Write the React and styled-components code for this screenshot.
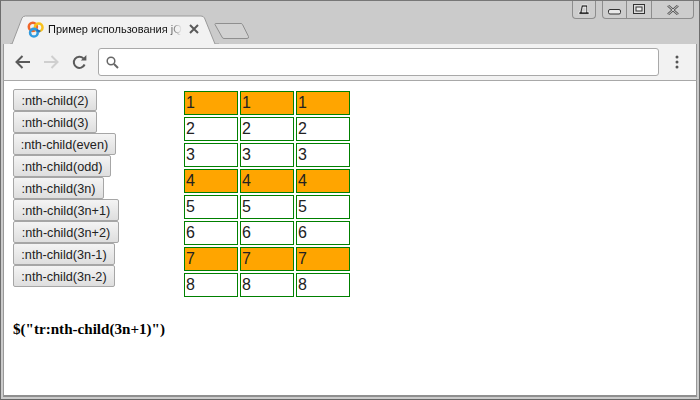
import React from "react";
import styled, { createGlobalStyle } from "styled-components";

const Global = createGlobalStyle`
  html, body { margin: 0; padding: 0; background: #fff; overflow: hidden; }
  * { box-sizing: border-box; }
`;
const Win = styled.div`
  width: 700px; height: 400px; background: #cbcbcb;
  border: 1px solid #6d6d6d; border-top-color: #777; border-bottom: 1px solid #666;
  display: flex; flex-direction: column; overflow: hidden;
`;
const TitleBar = styled.div`
  height: 43px; flex: none; display: flex; align-items: flex-start; position: relative;
  padding-left: 9px; justify-content: space-between;
`;
const Tabs = styled.div`display: flex; align-items: flex-start; padding-top: 14px;`;
const Tab = styled.div`
  position: relative; width: 209px; height: 29px; display: flex; align-items: center;
  padding: 0 0 0 17px;
`;
const TabShape = styled.svg`position: absolute; left: 0; top: 0;`;
const Fav = styled.svg`position: relative; flex: none;`;
const TabTitle = styled.span`
  position: relative; margin-left: 4px; width: 136px; overflow: hidden; white-space: nowrap;
  font: 11px "Liberation Sans", Arial, sans-serif; color: #111; margin-top: -2px;
  -webkit-mask-image: linear-gradient(to right, #000 118px, transparent 134px);
  mask-image: linear-gradient(to right, #000 118px, transparent 134px);
`;
const TabClose = styled.svg`position: relative; flex: none; margin-left: 5px; margin-top: -2px;`;
const NewTab = styled.svg`flex: none; margin: 7px 0 0 -5px;`;
const Caps = styled.div`display: flex; align-items: flex-start; margin-right: 5px;`;
const Cap = styled.div`
  height: 18px; border: 1px solid #8d8d8d; border-top: 0; width: ${p => p.$w}px;
  display: flex; align-items: center; justify-content: center; background: #cdcdcd;
  margin-left: ${p => p.$gap || 0}px;
  border-left-width: ${p => (p.$joined ? 0 : 1)}px;
  border-radius: ${p => p.$r || "0"};
`;
const Toolbar = styled.div`
  height: 37px; flex: none; margin: 0 2px; background: #f2f2f2; border: 0 solid #999;
  border-width: 0 1px 1px; border-bottom-color: #a8a8a8;
  display: flex; align-items: center; padding: 0 0 0 11px;
`;
const NavIcon = styled.svg`flex: none; margin-right: ${p => p.$mr}px;`;
const Omni = styled.div`
  width: 561px; height: 28px; background: #fff; border: 1px solid #a9a9a9; border-radius: 3px;
  display: flex; align-items: center; padding-left: 7px; margin-left: 3px;
`;
const Menu = styled.svg`margin-left: 16px; flex: none;`;
const Page = styled.div`
  flex: 1; margin: 0 2px 2px; background: #fff; border: 0 solid #8f8f8f;
  border-right: 1px solid #999; border-left: 1px solid #999; border-bottom: 2px solid #8f8f8f;
  padding: 8px 9px 0; font-family: "Liberation Sans", Arial, sans-serif;
`;
const Columns = styled.div`display: flex; align-items: flex-start;`;
const Buttons = styled.div`width: 170px; display: flex; flex-direction: column; align-items: flex-start;`;
const Btn = styled.button`
  height: 22px; width: ${p => p.$w}px; padding: 1px 0 0; margin: 0;
  font: 12.7px "Liberation Sans", Arial, sans-serif; color: #222;
  border: 1px solid #a6a6a6; border-radius: 2px;
  background: linear-gradient(#f4f4f4, #dedede);
`;
const Table = styled.div`
  display: grid; grid-template-columns: repeat(3, 54px); grid-auto-rows: 24px; gap: 2px;
  margin: 2px 0 0 1px;
`;
const Cell = styled.div`
  border: 1px solid green; background: ${p => (p.$hit ? "orange" : "#fff")};
  font: 16px/22px "Liberation Sans", Arial, sans-serif; color: #222; padding-left: 1px;
`;
const Code = styled.div`
  margin-top: 24px; font: bold 15.1px "Liberation Serif", "Times New Roman", serif; color: #000;
`;

const buttons = [
  [":nth-child(2)", 84], [":nth-child(3)", 84], [":nth-child(even)", 103], [":nth-child(odd)", 98],
  [":nth-child(3n)", 91], [":nth-child(3n+1)", 106], [":nth-child(3n+2)", 106],
  [":nth-child(3n-1)", 102], [":nth-child(3n-2)", 102],
];
const rows = [1, 2, 3, 4, 5, 6, 7, 8];

export default function App() {
  return (
    <>
      <Global />
      <Win>
        <TitleBar>
          <Tabs>
            <Tab>
              <TabShape width="209" height="29" viewBox="0 0 209 29">
                <path d="M0 29 H2 L12 3 Q13 1 15.5 1 H191 Q193.5 1 194.5 3 L205 29 H209" fill="#f2f2f2" stroke="#9a9a9a" />
              </TabShape>
              <Fav width="17" height="17" viewBox="0 0 16 16" fill="none">
                <circle cx="5.5" cy="5.5" r="3.8" stroke="#f0662a" strokeWidth="2.4" />
                <circle cx="11" cy="6" r="3.6" stroke="#f8c11c" strokeWidth="2.4" />
                <circle cx="6.5" cy="11" r="3.6" stroke="#2f9be0" strokeWidth="2.4" />
                <path d="M9 8.5 L12.5 10" stroke="#1f6fc0" strokeWidth="2" />
              </Fav>
              <TabTitle>Пример использования jQuery</TabTitle>
              <TabClose width="10" height="10" viewBox="0 0 10 10">
                <path d="M1 1 L9 9 M9 1 L1 9" stroke="#5a5a5a" strokeWidth="2" />
              </TabClose>
            </Tab>
            <NewTab width="36" height="18" viewBox="0 0 36 18">
              <path d="M1.5 1.5 H27 Q28 1.5 28.5 2.5 L34.5 14.5 Q35 16.5 33 16.5 H10 Q8.5 16.5 8 15 L1 2.5 Q1 1.5 1.5 1.5 Z" fill="#d2d2d2" stroke="#8f8f8f" />
            </NewTab>
          </Tabs>
          <Caps>
            <Cap $w={24} $r="0 0 4px 4px">
              <svg width="12" height="11" viewBox="0 0 12 11">
                <path d="M3.5 1 H9.5 V8 H11 V10.5 H1 V8 H2 Z M5 3 L4 8 H8 V3 Z" fill="#333" fillRule="evenodd" stroke="#fff" strokeWidth=".6" />
              </svg>
            </Cap>
            <Cap $w={25} $gap={6} $r="0 0 0 4px">
              <svg width="13" height="6" viewBox="0 0 13 6" style={{ marginTop: 5 }}>
                <rect x=".5" y=".5" width="12" height="4.5" rx="1.5" fill="#e8e8e8" stroke="#333" />
              </svg>
            </Cap>
            <Cap $w={25} $joined>
              <svg width="13" height="11" viewBox="0 0 13 11">
                <rect x=".5" y=".5" width="11" height="9" fill="#ddd" stroke="#333" />
                <rect x="3" y="3" width="6" height="4" fill="#eee" stroke="#333" />
              </svg>
            </Cap>
            <Cap $w={42} $joined $r="0 0 4px 0">
              <svg width="12" height="10" viewBox="0 0 12 10">
                <path d="M1 .5 L11 9.5 M11 .5 L1 9.5" stroke="#555" strokeWidth="2.4" />
                <path d="M1 .5 L11 9.5 M11 .5 L1 9.5" stroke="#eee" strokeWidth=".8" />
              </svg>
            </Cap>
          </Caps>
        </TitleBar>
        <Toolbar>
          <NavIcon $mr={12} width="16" height="14" viewBox="0 0 16 14" fill="none">
            <path d="M15 7 H2 M7.5 1 L1.5 7 L7.5 13" stroke="#5a5a5a" strokeWidth="2" />
          </NavIcon>
          <NavIcon $mr={13} width="16" height="14" viewBox="0 0 16 14" fill="none">
            <path d="M1 7 H14 M8.5 1 L14.5 7 L8.5 13" stroke="#cfcfcf" strokeWidth="2" />
          </NavIcon>
          <NavIcon $mr={8} width="15" height="15" viewBox="0 0 15 15" fill="none">
            <path d="M12.6 9.5 A5.6 5.6 0 1 1 11.4 3.4" stroke="#5a5a5a" strokeWidth="2" />
            <path d="M8.8 5.6 H14.4 V0 Z" fill="#5a5a5a" />
          </NavIcon>
          <Omni>
            <svg width="13" height="13" viewBox="0 0 13 13" fill="none">
              <circle cx="5" cy="5" r="3.8" stroke="#666" strokeWidth="1.5" />
              <path d="M8 8 L12 12" stroke="#666" strokeWidth="2" />
            </svg>
          </Omni>
          <Menu width="4" height="14" viewBox="0 0 4 14">
            <circle cx="2" cy="2" r="1.5" fill="#555" />
            <circle cx="2" cy="7" r="1.5" fill="#555" />
            <circle cx="2" cy="12" r="1.5" fill="#555" />
          </Menu>
        </Toolbar>
        <Page>
          <Columns>
            <Buttons>
              {buttons.map(([t, w]) => <Btn key={t} $w={w}>{t}</Btn>)}
            </Buttons>
            <Table>
              {rows.map(r => [0, 1, 2].map(c => (
                <Cell key={`${r}-${c}`} $hit={r % 3 === 1}>{r}</Cell>
              )))}
            </Table>
          </Columns>
          <Code>$("tr:nth-child(3n+1)")</Code>
        </Page>
      </Win>
    </>
  );
}
